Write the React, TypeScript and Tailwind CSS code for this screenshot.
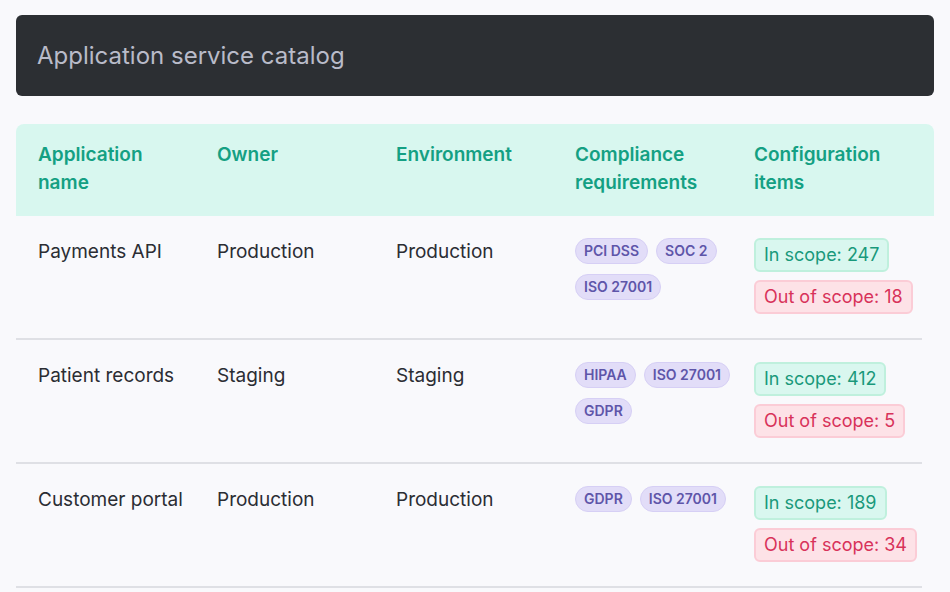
const rows = [
  { name: "Payments API", owner: "Production", env: "Production", tags: ["PCI DSS", "SOC 2", "ISO 27001"], inScope: 247, out: 18 },
  { name: "Patient records", owner: "Staging", env: "Staging", tags: ["HIPAA", "ISO 27001", "GDPR"], inScope: 412, out: 5 },
  { name: "Customer portal", owner: "Production", env: "Production", tags: ["GDPR", "ISO 27001"], inScope: 189, out: 34 },
];

export default function App() {
  return (
    <div className="h-[592px] w-[950px] overflow-hidden bg-[#f9f9fc] px-4 pt-[15px] font-[Inter,sans-serif]">
      <div className="flex h-[81px] items-center rounded-md bg-[#2c2f33] px-[21px]">
        <h1 className="text-[24px] text-[#b9bbc9]">Application service catalog</h1>
      </div>
      <div className="mt-7">
        <div className="grid h-[92px] grid-cols-[179px_179px_179px_179px_1fr] rounded-t-lg bg-[#d8f7ef] px-[22px] pt-[17px] text-[19px] font-semibold leading-[28px] text-[#14a083]">
          <div>Application<br />name</div>
          <div>Owner</div>
          <div>Environment</div>
          <div>Compliance<br />requirements</div>
          <div>Configuration<br />items</div>
        </div>
        {rows.map((r) => (
          <div key={r.name} className="mr-3 grid h-[124px] grid-cols-[179px_179px_179px_179px_1fr] border-b-2 border-[#dfe0e5] px-[22px] pt-[22px] text-[19px] leading-[28px] text-[#2b2d33]">
            <div>{r.name}</div>
            <div>{r.owner}</div>
            <div>{r.env}</div>
            <div className="flex flex-wrap content-start gap-x-2 gap-y-[10px] pr-2">
              {r.tags.map((t) => (
                <span key={t} className="whitespace-nowrap rounded-full border border-[#d6cff5] bg-[#e2ddf8] px-2 text-[14px] font-semibold leading-[24px] text-[#5e55a9]">{t}</span>
              ))}
            </div>
            <div className="flex flex-col items-start gap-2">
              <span className="whitespace-nowrap rounded-md border-2 border-[#bff0dd] bg-[#d9f7ef] px-2 text-[18px] leading-[30px] text-[#19997b]">In scope: {r.inScope}</span>
              <span className="whitespace-nowrap rounded-md border-2 border-[#fbccd6] bg-[#fde2e7] px-2 text-[18px] leading-[30px] text-[#d8325a]">Out of scope: {r.out}</span>
            </div>
          </div>
        ))}
      </div>
    </div>
  );
}
